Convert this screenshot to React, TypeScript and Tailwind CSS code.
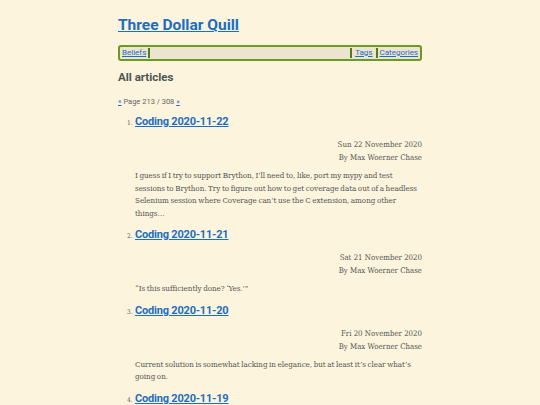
const posts = [
  {
    n: 1,
    title: "Coding 2020-11-22",
    date: "Sun 22 November 2020",
    summary:
      "I guess if I try to support Brython, I\u2019ll need to, like, port my mypy and test sessions to Brython. Try to figure out how to get coverage data out of a headless Selenium session where Coverage can\u2019t use the C extension, among other things\u2026",
  },
  {
    n: 2,
    title: "Coding 2020-11-21",
    date: "Sat 21 November 2020",
    summary: "\u201cIs this sufficiently done? \u2018Yes.\u2019\u201d",
  },
  {
    n: 3,
    title: "Coding 2020-11-20",
    date: "Fri 20 November 2020",
    summary:
      "Current solution is somewhat lacking in elegance, but at least it\u2019s clear what\u2019s going on.",
  },
  {
    n: 4,
    title: "Coding 2020-11-19",
    date: "Thu 19 November 2020",
    summary: "",
  },
];

const heading = "font-['Roboto',sans-serif]";
const body = "font-['DejaVu_Serif',serif] font-stretch-semi-condensed";

export default function App() {
  return (
    <div className="h-[405px] overflow-hidden bg-[#fcf4dc]">
      <div className="mx-auto w-[304px] pt-[13px]">
        <h1 className={`${heading} text-[15.5px] font-bold leading-[24px] text-[#1b6ec2]`}>
          <a href="#" className="underline">Three Dollar Quill</a>
        </h1>

        <nav className={`${heading} mt-[8px] flex h-[16px] items-center rounded-[3px] border-2 border-[#6a9a22] bg-[#ece4d0] px-[2px] text-[8px] leading-none`}>
          <a href="#" className="pr-[2px] text-[#1b6ec2] underline">Beliefs</a>
          <span className="h-[10px] w-[2px] bg-[#4f7f12]" />
          <span className="flex-1" />
          <span className="h-[10px] w-[2px] bg-[#4f7f12]" />
          <a href="#" className="px-[3px] text-[#1b6ec2] underline">Tags</a>
          <span className="h-[10px] w-[2px] bg-[#4f7f12]" />
          <a href="#" className="pl-[2px] text-[#1b6ec2] underline">Categories</a>
        </nav>

        <h2 className={`${heading} mt-[8px] text-[11.5px] font-bold leading-[16px] text-[#4d5552]`}>
          All articles
        </h2>

        <p className={`${heading} mt-[12px] text-[7.5px] leading-[10px] text-[#666]`}>
          <a href="#" className="text-[#1b6ec2] underline">&laquo;</a> Page 213 / 308{" "}
          <a href="#" className="text-[#1b6ec2] underline">&raquo;</a>
        </p>

        <ol className="mt-[6px] pl-[17px]">
          {posts.map((p) => (
            <li key={p.n} className="mb-[6px]">
              <div className="flex items-baseline">
                <span className={`${body} -ml-[8px] w-[8px] text-[6.5px] text-[#555]`}>{p.n}.</span>
                <a href="#" className={`${heading} text-[11px] font-bold leading-[18px] tracking-[-0.2px] text-[#1b6ec2] underline`}>
                  {p.title}
                </a>
              </div>
              <div className={`${body} mt-[7px] text-right text-[7.8px] leading-[13px] text-[#555]`}>
                <div>{p.date}</div>
                <div>By Max Woerner Chase</div>
              </div>
              {p.summary && (
                <p className={`${body} mt-[6px] text-[8px] leading-[12.5px] tracking-[-0.05px] [word-spacing:-0.6px] text-[#555]`}>
                  {p.summary}
                </p>
              )}
            </li>
          ))}
        </ol>
      </div>
    </div>
  );
}
